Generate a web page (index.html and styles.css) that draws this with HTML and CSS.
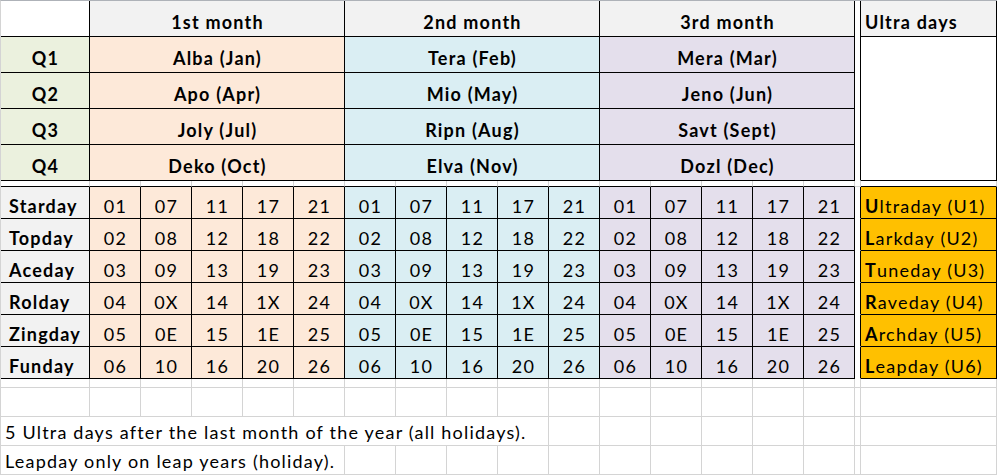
FILE: index.html
```html
<!DOCTYPE html>
<html>
<head>
<meta charset="utf-8">
<link rel="stylesheet" href="styles.css">
</head>
<body>
<div class="sheet">
  <!-- header row -->
  <div class="c b wh"></div>
  <div class="c b gy ctr s5 big">1st month</div>
  <div class="c b gy ctr s5 big">2nd month</div>
  <div class="c b gy ctr s5 big">3rd month</div>
  <div class="c narrow-top"></div>
  <div class="c b gy lft big bold">Ultra days</div>

  <!-- Q1 -->
  <div class="c b gr ctr big">Q1</div>
  <div class="c b pe ctr s5 big">Alba (Jan)</div>
  <div class="c b bl ctr s5 big">Tera (Feb)</div>
  <div class="c b la ctr s5 big">Mera (Mar)</div>
  <div class="c b wh ultra-box"></div>
  <!-- Q2 -->
  <div class="c b gr ctr big">Q2</div>
  <div class="c b pe ctr s5 big">Apo (Apr)</div>
  <div class="c b bl ctr s5 big">Mio (May)</div>
  <div class="c b la ctr s5 big">Jeno (Jun)</div>
  <!-- Q3 -->
  <div class="c b gr ctr big">Q3</div>
  <div class="c b pe ctr s5 big">Joly (Jul)</div>
  <div class="c b bl ctr s5 big">Ripn (Aug)</div>
  <div class="c b la ctr s5 big">Savt (Sept)</div>
  <!-- Q4 -->
  <div class="c b gr ctr big">Q4</div>
  <div class="c b pe ctr s5 big">Deko (Oct)</div>
  <div class="c b bl ctr s5 big">Elva (Nov)</div>
  <div class="c b la ctr s5 big">Dozl (Dec)</div>

  <!-- gap row -->
  <div class="c gap"></div><div class="c gap"></div><div class="c gap"></div><div class="c gap"></div><div class="c gap"></div>
  <div class="c gap"></div><div class="c gap"></div><div class="c gap"></div><div class="c gap"></div><div class="c gap"></div>
  <div class="c gap"></div><div class="c gap"></div><div class="c gap"></div><div class="c gap"></div><div class="c gap"></div>
  <div class="c gap"></div>
  <div class="c"></div>
  <div class="c gap"></div>

  <!-- Starday -->
  <div class="c b gy lft day bold">Starday</div>
  <div class="c b pe ctr day">01</div><div class="c b pe ctr day">07</div><div class="c b pe ctr day">11</div><div class="c b pe ctr day">17</div><div class="c b pe ctr day">21</div>
  <div class="c b bl ctr day">01</div><div class="c b bl ctr day">07</div><div class="c b bl ctr day">11</div><div class="c b bl ctr day">17</div><div class="c b bl ctr day">21</div>
  <div class="c b la ctr day">01</div><div class="c b la ctr day">07</div><div class="c b la ctr day">11</div><div class="c b la ctr day">17</div><div class="c b la ctr day">21</div>
  <div class="c narrow"></div>
  <div class="c b or lft day"><b>U</b>ltraday (U1)</div>

  <!-- Topday -->
  <div class="c b gy lft day bold">Topday</div>
  <div class="c b pe ctr day">02</div><div class="c b pe ctr day">08</div><div class="c b pe ctr day">12</div><div class="c b pe ctr day">18</div><div class="c b pe ctr day">22</div>
  <div class="c b bl ctr day">02</div><div class="c b bl ctr day">08</div><div class="c b bl ctr day">12</div><div class="c b bl ctr day">18</div><div class="c b bl ctr day">22</div>
  <div class="c b la ctr day">02</div><div class="c b la ctr day">08</div><div class="c b la ctr day">12</div><div class="c b la ctr day">18</div><div class="c b la ctr day">22</div>
  <div class="c narrow"></div>
  <div class="c b or lft day"><b>L</b>arkday (U2)</div>

  <!-- Aceday -->
  <div class="c b gy lft day bold">Aceday</div>
  <div class="c b pe ctr day">03</div><div class="c b pe ctr day">09</div><div class="c b pe ctr day">13</div><div class="c b pe ctr day">19</div><div class="c b pe ctr day">23</div>
  <div class="c b bl ctr day">03</div><div class="c b bl ctr day">09</div><div class="c b bl ctr day">13</div><div class="c b bl ctr day">19</div><div class="c b bl ctr day">23</div>
  <div class="c b la ctr day">03</div><div class="c b la ctr day">09</div><div class="c b la ctr day">13</div><div class="c b la ctr day">19</div><div class="c b la ctr day">23</div>
  <div class="c narrow"></div>
  <div class="c b or lft day"><b>T</b>uneday (U3)</div>

  <!-- Rolday -->
  <div class="c b gy lft day bold">Rolday</div>
  <div class="c b pe ctr day">04</div><div class="c b pe ctr day">0X</div><div class="c b pe ctr day">14</div><div class="c b pe ctr day">1X</div><div class="c b pe ctr day">24</div>
  <div class="c b bl ctr day">04</div><div class="c b bl ctr day">0X</div><div class="c b bl ctr day">14</div><div class="c b bl ctr day">1X</div><div class="c b bl ctr day">24</div>
  <div class="c b la ctr day">04</div><div class="c b la ctr day">0X</div><div class="c b la ctr day">14</div><div class="c b la ctr day">1X</div><div class="c b la ctr day">24</div>
  <div class="c narrow"></div>
  <div class="c b or lft day"><b>R</b>aveday (U4)</div>

  <!-- Zingday -->
  <div class="c b gy lft day bold">Zingday</div>
  <div class="c b pe ctr day">05</div><div class="c b pe ctr day">0E</div><div class="c b pe ctr day">15</div><div class="c b pe ctr day">1E</div><div class="c b pe ctr day">25</div>
  <div class="c b bl ctr day">05</div><div class="c b bl ctr day">0E</div><div class="c b bl ctr day">15</div><div class="c b bl ctr day">1E</div><div class="c b bl ctr day">25</div>
  <div class="c b la ctr day">05</div><div class="c b la ctr day">0E</div><div class="c b la ctr day">15</div><div class="c b la ctr day">1E</div><div class="c b la ctr day">25</div>
  <div class="c narrow"></div>
  <div class="c b or lft day"><b>A</b>rchday (U5)</div>

  <!-- Funday -->
  <div class="c b gy lft day bold">Funday</div>
  <div class="c b pe ctr day">06</div><div class="c b pe ctr day">10</div><div class="c b pe ctr day">16</div><div class="c b pe ctr day">20</div><div class="c b pe ctr day">26</div>
  <div class="c b bl ctr day">06</div><div class="c b bl ctr day">10</div><div class="c b bl ctr day">16</div><div class="c b bl ctr day">20</div><div class="c b bl ctr day">26</div>
  <div class="c b la ctr day">06</div><div class="c b la ctr day">10</div><div class="c b la ctr day">16</div><div class="c b la ctr day">20</div><div class="c b la ctr day">26</div>
  <div class="c narrow"></div>
  <div class="c b or lft day"><b>L</b>eapday (U6)</div>

  <!-- spacer row -->
  <div class="c"></div><div class="c"></div><div class="c"></div><div class="c"></div><div class="c"></div>
  <div class="c"></div><div class="c"></div><div class="c"></div><div class="c"></div><div class="c"></div>
  <div class="c"></div><div class="c"></div><div class="c"></div><div class="c"></div><div class="c"></div>
  <div class="c"></div><div class="c"></div><div class="c"></div>

  <!-- empty row -->
  <div class="c"></div><div class="c"></div><div class="c"></div><div class="c"></div><div class="c"></div>
  <div class="c"></div><div class="c"></div><div class="c"></div><div class="c"></div><div class="c"></div>
  <div class="c"></div><div class="c"></div><div class="c"></div><div class="c"></div><div class="c"></div>
  <div class="c"></div><div class="c"></div><div class="c"></div>

  <!-- note 1 -->
  <div class="c note s10">5 Ultra days after the last month of the year (all holidays).</div>
  <div class="c"></div><div class="c"></div><div class="c"></div><div class="c"></div><div class="c"></div>
  <div class="c"></div><div class="c"></div><div class="c"></div>

  <!-- note 2 -->
  <div class="c note s6">Leapday only on leap years (holiday).</div>
  <div class="c"></div><div class="c"></div><div class="c"></div><div class="c"></div><div class="c"></div>
  <div class="c"></div><div class="c"></div><div class="c"></div><div class="c"></div><div class="c"></div>
  <div class="c"></div><div class="c"></div>
</div>
</body>
</html>
```

FILE: styles.css
```css
html, body {
  margin: 0;
  padding: 0;
  background: #ffffff;
}

body {
  width: 997px;
  height: 475px;
  overflow: hidden;
  font-family: Lato, "Open Sans", sans-serif;
  font-size: 18px;
  letter-spacing: 1.2px;
  color: #000000;
}

.sheet {
  display: grid;
  grid-template-columns: 89px repeat(15, 51px) 6px 136px;
  grid-template-rows: repeat(5, 36px) 6px repeat(6, 32px) 9px 29px 29px 29px;
  width: 997px;
  box-sizing: border-box;
  border-top: 1px solid #aeb2b8;
  border-left: 1px solid #d4d4d4;
}

.c {
  box-sizing: border-box;
  border-right: 1px solid #d4d4d4;
  border-bottom: 1px solid #d4d4d4;
  display: flex;
  align-items: flex-end;
  line-height: 20px;
  white-space: nowrap;
  overflow: hidden;
  background: #ffffff;
}

.b {
  border-right-color: #000000;
  border-bottom-color: #000000;
}

.gap {
  border-bottom-color: #000000;
}

.s5 { grid-column: span 5; }
.s6 { grid-column: span 6; }
.s10 { grid-column: span 10; }

.ctr {
  justify-content: center;
  padding-left: 1px;
}
.lft { justify-content: flex-start; }

.big {
  font-weight: 700;
  padding-bottom: 4px;
}

.day {
  padding-bottom: 2px;
}

.bold { font-weight: 700; }

.gy.lft.day { padding-left: 8px; }
.or.lft { padding-left: 4px; }
.gy.lft.big { padding-left: 4px; }

.wh { background: #ffffff; }
.gy { background: #f2f2f2; }
.gr { background: #ebf1de; }
.pe { background: #fde9d9; }
.bl { background: #daeef3; }
.la { background: #e4dfec; }
.or { background: #ffc000; }

.narrow-top {
  grid-row: span 5;
  border-right-color: #000000;
  border-bottom-color: #ffffff;
}

.narrow {
  border-right-color: #000000;
  border-bottom-color: #ffffff;
}

.ultra-box {
  grid-row: span 4;
}

.note {
  padding-left: 4px;
  padding-bottom: 3px;
}
```
